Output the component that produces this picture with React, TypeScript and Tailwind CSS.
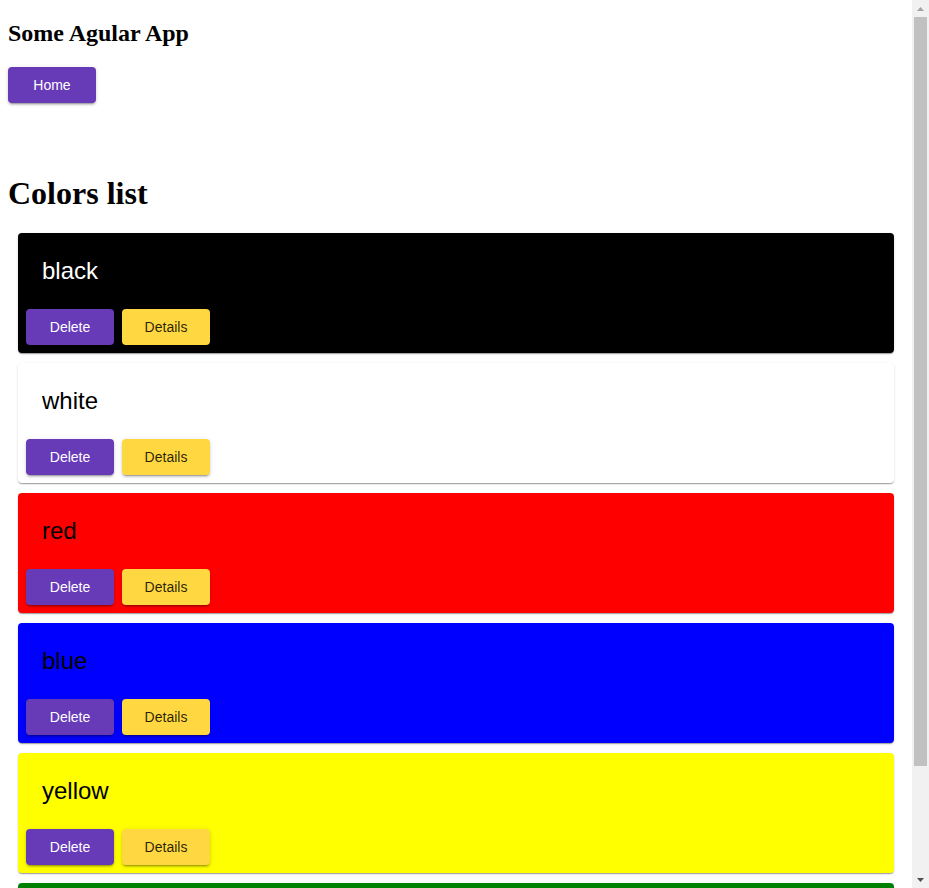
const colors = [
  { name: "black", bg: "bg-black", text: "text-white" },
  { name: "white", bg: "bg-white", text: "text-black" },
  { name: "red", bg: "bg-[#ff0000]", text: "text-black" },
  { name: "blue", bg: "bg-[#0000ff]", text: "text-black" },
  { name: "yellow", bg: "bg-[#ffff00]", text: "text-black" },
  { name: "green", bg: "bg-[#008000]", text: "text-black" },
];

const raised =
  "shadow-[0_3px_1px_-2px_rgba(0,0,0,0.2),0_2px_2px_0_rgba(0,0,0,0.14),0_1px_5px_0_rgba(0,0,0,0.12)]";

function ColorCard({ name, bg, text }: { name: string; bg: string; text: string }) {
  return (
    <div
      className={`${bg} ${text} rounded px-2 pt-6 pb-2 shadow-[0_2px_1px_-1px_rgba(0,0,0,0.2),0_1px_1px_0_rgba(0,0,0,0.14),0_1px_3px_0_rgba(0,0,0,0.12)]`}
    >
      <div className="pl-4 text-[24px] leading-[28px]">{name}</div>
      <div className="mt-6 flex gap-2">
        <button
          className={`h-9 w-[88px] rounded bg-[#673ab7] text-[14px] text-white ${raised}`}
        >
          Delete
        </button>
        <button
          className={`h-9 w-[88px] rounded bg-[#ffd740] text-[14px] text-black/85 ${raised}`}
        >
          Details
        </button>
      </div>
    </div>
  );
}

// fake classic scrollbar, the page in the shot is scrolled to top
function Scrollbar() {
  return (
    <div className="flex w-[17px] shrink-0 flex-col bg-[#f1f1f1]">
      <div className="flex h-[17px] items-center justify-center">
        <svg width="7" height="4" viewBox="0 0 7 4">
          <path d="M0 4 L3.5 0 L7 4 Z" fill="#a3a3a3" />
        </svg>
      </div>
      <div className="mx-[2px] h-[749px] bg-[#c1c1c1]" />
      <div className="flex-1" />
      <div className="flex h-[17px] items-center justify-center">
        <svg width="7" height="4" viewBox="0 0 7 4">
          <path d="M0 0 L7 0 L3.5 4 Z" fill="#505050" />
        </svg>
      </div>
    </div>
  );
}

export default function App() {
  return (
    <div className="flex h-screen overflow-hidden bg-white">
      <div className="min-w-0 flex-1 overflow-hidden px-2 pt-[19px] pb-[10px] font-['Liberation_Sans',Arial,sans-serif] text-black">
        <h2 className="font-['Liberation_Serif',serif] text-[24px] leading-[28px] font-bold">
          Some Agular App
        </h2>
        <button
          className={`mt-5 h-9 w-[88px] rounded bg-[#673ab7] text-[14px] text-white ${raised}`}
        >
          Home
        </button>
        <h1 className="mt-[72px] font-['Liberation_Serif',serif] text-[32px] leading-[36px] font-bold">
          Colors list
        </h1>
        <div className="mx-[10px] mt-[22px] flex flex-col gap-[10px]">
          {colors.map((c) => (
            <ColorCard key={c.name} {...c} />
          ))}
        </div>
      </div>
      <Scrollbar />
    </div>
  );
}
